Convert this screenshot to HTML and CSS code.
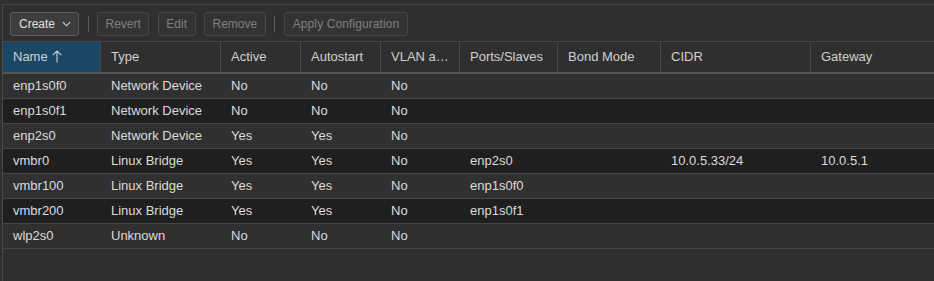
FILE: index.html
```html
<!DOCTYPE html>
<html>
<head>
<meta charset="utf-8">
<link rel="stylesheet" href="styles.css">
</head>
<body>
<div class="panel">
  <div class="toolbar">
    <button class="btn">Create <svg class="caret" width="10" height="6" viewBox="0 0 10 6"><path d="M1 1 L5 5 L9 1" fill="none" stroke="#d8d8d8" stroke-width="1.2"/></svg></button>
    <span class="sep"></span>
    <button class="btn dis">Revert</button>
    <button class="btn dis">Edit</button>
    <button class="btn dis">Remove</button>
    <span class="sep"></span>
    <button class="btn dis wide">Apply Configuration</button>
  </div>
  <div class="grid">
    <div class="row head">
      <div class="c c1 sorted">Name <svg class="arrow" width="10" height="13" viewBox="0 0 10 13"><path d="M5 12.5 V1 M0.8 5.2 L5 1 L9.2 5.2" fill="none" stroke="#c8d0d8" stroke-width="1.1"/></svg></div>
      <div class="c c2">Type</div>
      <div class="c c3">Active</div>
      <div class="c c4">Autostart</div>
      <div class="c c5">VLAN a…</div>
      <div class="c c6">Ports/Slaves</div>
      <div class="c c7">Bond Mode</div>
      <div class="c c8">CIDR</div>
      <div class="c c9">Gateway</div>
    </div>
    <div class="row">
      <div class="c c1">enp1s0f0</div><div class="c c2">Network Device</div><div class="c c3">No</div><div class="c c4">No</div><div class="c c5">No</div><div class="c c6"></div><div class="c c7"></div><div class="c c8"></div><div class="c c9"></div>
    </div>
    <div class="row alt">
      <div class="c c1">enp1s0f1</div><div class="c c2">Network Device</div><div class="c c3">No</div><div class="c c4">No</div><div class="c c5">No</div><div class="c c6"></div><div class="c c7"></div><div class="c c8"></div><div class="c c9"></div>
    </div>
    <div class="row">
      <div class="c c1">enp2s0</div><div class="c c2">Network Device</div><div class="c c3">Yes</div><div class="c c4">Yes</div><div class="c c5">No</div><div class="c c6"></div><div class="c c7"></div><div class="c c8"></div><div class="c c9"></div>
    </div>
    <div class="row alt">
      <div class="c c1">vmbr0</div><div class="c c2">Linux Bridge</div><div class="c c3">Yes</div><div class="c c4">Yes</div><div class="c c5">No</div><div class="c c6">enp2s0</div><div class="c c7"></div><div class="c c8">10.0.5.33/24</div><div class="c c9">10.0.5.1</div>
    </div>
    <div class="row">
      <div class="c c1">vmbr100</div><div class="c c2">Linux Bridge</div><div class="c c3">Yes</div><div class="c c4">Yes</div><div class="c c5">No</div><div class="c c6">enp1s0f0</div><div class="c c7"></div><div class="c c8"></div><div class="c c9"></div>
    </div>
    <div class="row alt">
      <div class="c c1">vmbr200</div><div class="c c2">Linux Bridge</div><div class="c c3">Yes</div><div class="c c4">Yes</div><div class="c c5">No</div><div class="c c6">enp1s0f1</div><div class="c c7"></div><div class="c c8"></div><div class="c c9"></div>
    </div>
    <div class="row">
      <div class="c c1">wlp2s0</div><div class="c c2">Unknown</div><div class="c c3">No</div><div class="c c4">No</div><div class="c c5">No</div><div class="c c6"></div><div class="c c7"></div><div class="c c8"></div><div class="c c9"></div>
    </div>
  </div>
</div>
</body>
</html>
```

FILE: styles.css
```css
html, body {
  margin: 0;
  padding: 0;
  background: #2f2f2f;
  width: 934px;
  height: 281px;
  overflow: hidden;
  font-family: "Liberation Sans", Arial, sans-serif;
  font-size: 13px;
}
.panel {
  margin: 4px 0 0 2px;
  border-top: 1px solid #4a4a4a;
  border-left: 1px solid #4a4a4a;
  height: 276px;
  background: #2f2f2f;
}
.toolbar {
  display: flex;
  align-items: center;
  height: 36px;
  padding-left: 7px;
  padding-top: 1px;
  box-sizing: border-box;
  gap: 8.5px;
}
.btn {
  font-family: inherit;
  font-size: 12px;
  height: 24px;
  padding: 0 7.5px;
  background: #373737;
  border: 1px solid #4d4d4d;
  border-radius: 3px;
  color: #e0e0e0;
  display: flex;
  align-items: center;
  gap: 7px;
  box-sizing: border-box;
}
.btn:first-child {
  background: #3d3d3d;
  border-color: #5a5a5a;
  padding: 0 7px 0 8px;
  width: 69px;
}
.btn.dis {
  color: #7f7f7f;
  background: #333;
  border-color: #474747;
}
.btn.wide { letter-spacing: 0.1px; padding: 0 8px; }
.caret { margin-top: 1px; }
.sep {
  width: 1px;
  height: 16px;
  background: #5a5a5a;
}
.grid {
  display: flex;
  flex-direction: column;
}
.row {
  display: grid;
  grid-template-columns: 98px 120px 80px 80px 79px 98px 103px 150px 1fr;
  height: 25px;
  border-bottom: 1px solid #464646;
  background: #303030;
  color: #dcdcdc;
  box-sizing: border-box;
}
.row.alt { background: #1f1f1f; }
.c {
  padding-left: 10px;
  line-height: 24px;
  white-space: nowrap;
  overflow: hidden;
}
.row.head {
  height: 33px;
  background: #2f2f2f;
  border-top: 1px solid #464646;
  border-bottom: 2px solid #555;
  color: #d0d0d0;
}
.row.head .c {
  line-height: 30px;
  border-right: 1px solid #474747;
}
.row.head .c9 { border-right: none; }
.row.head .sorted {
  background: #1b4764;
  display: flex;
  align-items: center;
  gap: 4px;
}
.arrow { margin-top: -1px; }
```
